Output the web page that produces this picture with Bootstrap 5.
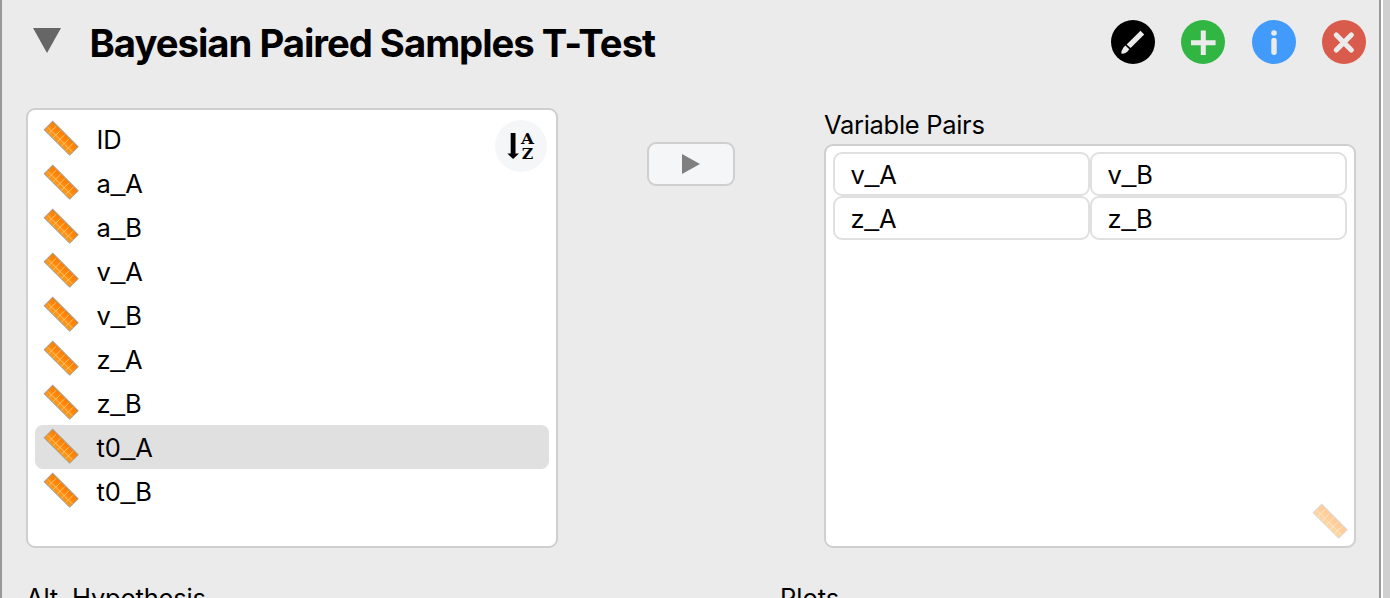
<!DOCTYPE html>
<html lang="en">
<head>
<meta charset="utf-8">
<meta name="viewport" content="width=device-width, initial-scale=1">
<title>Bayesian Paired Samples T-Test</title>
<link rel="stylesheet" href="https://cdn.jsdelivr.net/npm/bootstrap@5.3.0/dist/css/bootstrap.min.css">
<style>
  body { height: 598px; background: #d0d0d0; font-family: Inter, "Liberation Sans", sans-serif; font-size: 25.5px; line-height: 44px; color: #000; }
  .analysis { width: 1381px; height: 598px; background: #ebebeb; border: solid #999; border-width: 0 2px; box-shadow: 2px 0 0 #fff; }
  .title-bar { height: 84px; padding: 0 13px 0 31px; }
  .title-bar h1 { font-size: 38.3px; font-weight: 700; letter-spacing: -1.02px; margin: 2px 0 0 28.5px; line-height: 44px; }
  .tools { gap: 26.3px; }
  .tools .btn, .tools svg { width: 44px; height: 44px; display: block; }
  .field { background: #fff; border: 2px solid #cfcfcf; border-radius: 9px; }
  .form-area { padding-left: 24px; height: 464px; }
  .source { width: 532px; height: 440px; margin-top: 24px; padding: 7px; }
  .source li { height: 44px; padding-left: 8px; border-radius: 8px; }
  .source li svg { margin-top: -2px; }
  .source li.selected { background: #e0e0e0; }
  .source li > span { margin: 1px 0 0 17.6px; }
  .sort { width: 52px; height: 52px; top: 10px; right: 9px; background: #f5f6f8; }
  .mover { width: 88px; height: 44px; margin: 58px 89px 0; background: #f5f6f8; }
  .target { width: 532px; }
  .target label { height: 60px; padding-top: 19px; letter-spacing: -.3px; }
  .pairs { height: 404px; padding: 6px 7px; }
  .cell { height: 44px; border: 2px solid #e0e0e0; border-radius: 9px; padding-left: 15.5px; line-height: 42px; width: 257px; }
  .allowed { right: 6px; bottom: 7px; opacity: .4; }
  .section-row { height: 50px; }
  .lbl { letter-spacing: -.2px; }
  .us { position: relative; top: -2px; font-family: "Liberation Sans", sans-serif; font-size: 26px; line-height: 1; letter-spacing: .1px; }
</style>
</head>
<body class="overflow-hidden">
<svg width="0" height="0" class="position-absolute" aria-hidden="true">
  <defs>
    <linearGradient id="orange" x1="0" y1="0" x2="0" y2="1"><stop offset="0" stop-color="#ff7a00"/><stop offset="1" stop-color="#ff9a18"/></linearGradient>
    <symbol id="scale" viewBox="0 0 36 36">
      <g transform="translate(9.7 1.2) rotate(45)">
        <rect x="0" y="0" width="36" height="12" fill="url(#orange)" stroke="#aaa08e" stroke-width="1"/>
        <path d="M1 7.8H35.5M6 1V11.5M12 1V11.5M18 1V11.5M24 1V11.5M30 1V11.5" stroke="#ffc878" stroke-width=".9" fill="none"/>
      </g>
    </symbol>
  </defs>
</svg>
<main class="analysis">
  <header class="title-bar d-flex align-items-center">
    <svg width="28" height="26" viewBox="0 0 28 26" style="margin-top:-3px"><path d="M0 0H28L14 25Z" fill="#666"/></svg>
    <h1 class="text-nowrap">Bayesian Paired Samples T-Test</h1>
    <div class="tools d-flex ms-auto">
      <button class="btn p-0 border-0" aria-label="Edit title"><svg viewBox="0 0 44 44"><circle cx="22" cy="22" r="22"/><path d="M29.5 10.8L33.2 14.4L19.6 28L15.6 24.4ZM14.4 25.6L18.3 29.3L16.3 31.7Q13.3 34.2 10.3 33.5Q10.2 30.5 12.4 27.4Z" fill="#ebebeb"/></svg></button>
      <button class="btn p-0 border-0" aria-label="Duplicate"><svg viewBox="0 0 44 44"><circle cx="22" cy="22" r="22" fill="#31b643"/><path d="M22.3 10.5V35M10 22.7H34.6" stroke="#ebebeb" stroke-width="5"/></svg></button>
      <button class="btn p-0 border-0" aria-label="Info"><svg viewBox="0 0 44 44"><circle cx="22" cy="22" r="22" fill="#429bfa"/><circle cx="22" cy="13" r="2.8" fill="#ebebeb"/><path d="M22 20.5V32.3" stroke="#ebebeb" stroke-width="5.4" stroke-linecap="round"/></svg></button>
      <button class="btn p-0 border-0" aria-label="Remove"><svg viewBox="0 0 44 44"><circle cx="22" cy="22" r="22" fill="#d85b4b"/><path d="M14.3 15L29.3 30M29.3 15L14.3 30" stroke="#ebebeb" stroke-width="5.2" stroke-linecap="round"/></svg></button>
    </div>
  </header>
  <section class="form-area d-flex">
    <div class="field source position-relative">
      <ul class="list-unstyled m-0 lbl">
        <li class="d-flex align-items-center"><svg width="36" height="36"><use href="#scale"/></svg><span>ID</span></li>
        <li class="d-flex align-items-center"><svg width="36" height="36"><use href="#scale"/></svg><span>a<span class="us">_</span>A</span></li>
        <li class="d-flex align-items-center"><svg width="36" height="36"><use href="#scale"/></svg><span>a<span class="us">_</span>B</span></li>
        <li class="d-flex align-items-center"><svg width="36" height="36"><use href="#scale"/></svg><span>v<span class="us">_</span>A</span></li>
        <li class="d-flex align-items-center"><svg width="36" height="36"><use href="#scale"/></svg><span>v<span class="us">_</span>B</span></li>
        <li class="d-flex align-items-center"><svg width="36" height="36"><use href="#scale"/></svg><span>z<span class="us">_</span>A</span></li>
        <li class="d-flex align-items-center"><svg width="36" height="36"><use href="#scale"/></svg><span>z<span class="us">_</span>B</span></li>
        <li class="d-flex align-items-center selected"><svg width="36" height="36"><use href="#scale"/></svg><span>t0<span class="us">_</span>A</span></li>
        <li class="d-flex align-items-center"><svg width="36" height="36"><use href="#scale"/></svg><span>t0<span class="us">_</span>B</span></li>
      </ul>
      <button class="btn p-0 border-0 sort rounded-circle position-absolute" aria-label="Sort">
        <svg class="d-block" width="52" height="52" viewBox="0 0 52 52"><path d="M15.7 13H20.5V33.5H24L18.1 39L12.3 33.5H15.7Z"/><g font-family="DejaVu Serif, serif" font-weight="700" font-size="15.5" text-anchor="middle"><text x="32.6" y="24.2" textLength="13" lengthAdjust="spacingAndGlyphs">A</text><text x="32.6" y="39" textLength="11.5" lengthAdjust="spacingAndGlyphs">Z</text></g></svg>
      </button>
    </div>
    <button class="btn p-0 field mover d-flex align-items-center justify-content-center" aria-label="Move"><svg width="18" height="20" viewBox="0 0 18 20"><path d="M0 0L18 10L0 20Z" fill="#808080"/></svg></button>
    <div class="target">
      <label class="d-block">Variable Pairs</label>
      <div class="field pairs position-relative">
        <div class="d-flex lbl"><div class="cell">v<span class="us">_</span>A</div><div class="cell">v<span class="us">_</span>B</div></div>
        <div class="d-flex lbl"><div class="cell">z<span class="us">_</span>A</div><div class="cell">z<span class="us">_</span>B</div></div>
        <svg class="allowed position-absolute" width="36" height="36"><use href="#scale"/></svg>
      </div>
    </div>
  </section>
  <section class="section-row d-flex lbl">
    <div style="width:753px;padding:28px 0 0 24px">Alt. Hypothesis</div>
    <div style="padding:28px 0 0 25px;letter-spacing:0">Plots</div>
  </section>
</main>
<script src="https://cdn.jsdelivr.net/npm/bootstrap@5.3.0/dist/js/bootstrap.bundle.min.js"></script>
</body>
</html>
